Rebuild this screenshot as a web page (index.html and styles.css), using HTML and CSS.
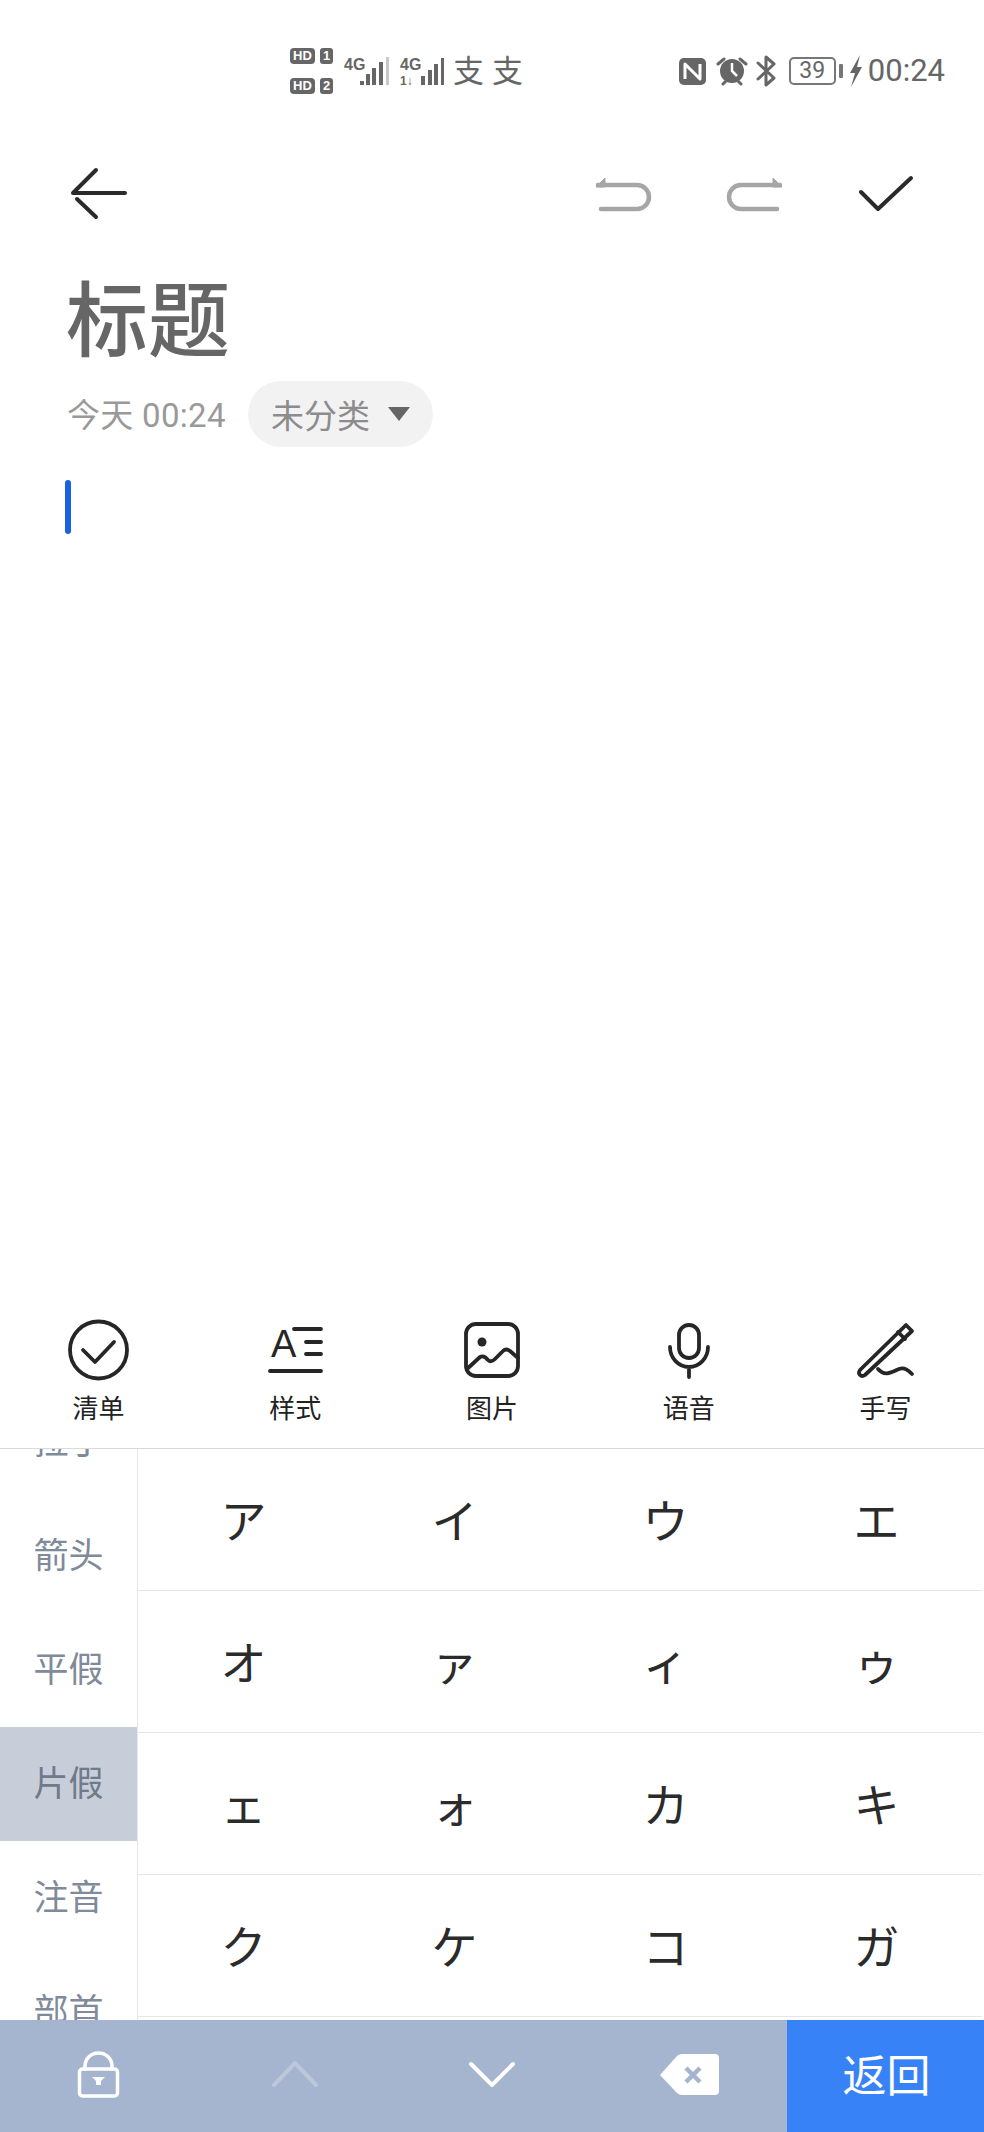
FILE: index.html
```html
<!DOCTYPE html>
<html lang="zh">
<head>
<meta charset="utf-8">
<title>笔记</title>
<link rel="stylesheet" href="styles.css">
</head>
<body>
<div class="page">
  <div class="status">
    <div class="status-left">
      <div class="sims">
        <div class="sim"><span class="hd">HD</span><span class="simno">1</span></div>
        <div class="sim"><span class="hd">HD</span><span class="simno">2</span></div>
      </div>
      <svg class="signal" viewBox="344 50 100 40">
        <text x="344" y="70" class="tag">4G</text>
        <path class="bar" d="M362 85v-4M368 85v-11M374 85v-17M381 85v-23"/>
        <path class="bar dim" d="M387.500 85V57"/>
        <text x="400" y="70" class="tag">4G</text>
        <text x="400" y="85" class="tag small">1↓</text>
        <path class="bar" d="M423 85v-9M430 85v-15M436 85v-21M443 85v-27"/>
      </svg>
      <span class="pay">支</span>
      <span class="pay">支</span>
    </div>
    <div class="status-right">
      <svg class="st-icon nfc" viewBox="677 57 27 27">
        <rect class="fill" x="677" y="57" width="27" height="27" rx="5"/>
        <path class="nfc-n" d="M683 78V63L698 78V63"/>
      </svg>
      <svg class="st-icon alarm" viewBox="714 56 32 30">
        <circle class="fill" cx="730" cy="71" r="12"/>
        <path class="hand" d="M730 63v8l5 5"/>
        <path class="ear" d="M716 64l6-5M744 64l-6-5M721 84l3-3M739 84l-3-3"/>
      </svg>
      <svg class="st-icon bt" viewBox="754 55 21 32">
        <path class="ear" d="M756 63l16 15-8 7V57l8 7-16 15"/>
      </svg>
      <div class="battery"><span class="batt-num">39</span></div>
      <span class="batt-nub"></span>
      <svg class="st-icon bolt" viewBox="847 55 14 32">
        <path class="fill" d="M858 55L848 73H853L849 87L860 67H855Z"/>
      </svg>
      <span class="time">00:24</span>
    </div>
  </div>

  <div class="header">
    <svg class="hd-back" viewBox="68 144 60 100"><path class="ico-dark" d="M125 193H73L96 170M77 199L96 217"/></svg>
    <div class="hd-actions">
      <svg class="hd-ico" viewBox="590 144 66 100"><path class="ico-grey" d="M598 185H637A12 12 0 0 1 637 209H601"/><path class="tri" d="M596 187L605 178V187Z"/></svg>
      <svg class="hd-ico" viewBox="721 144 66 100"><path class="ico-grey" d="M780 185H741A12 12 0 0 0 741 209H777"/><path class="tri" d="M782 187L773 178V187Z"/></svg>
      <svg class="hd-ico" viewBox="852 144 66 100"><path class="ico-dark" d="M861 192L878 209L911 178"/></svg>
    </div>
  </div>

  <h1 class="title">标题</h1>
  <div class="meta">
    <span class="date">今天 00:24</span>
    <span class="chip"><span class="chip-text">未分类</span><span class="chip-arrow"></span></span>
  </div>
  <div class="caret"></div>
  <div class="spacer"></div>

  <div class="tools">
    <div class="tool">
      <svg class="tool-ico" viewBox="63 1318 70 64"><circle class="line" cx="98.500" cy="1350" r="28.500"/><path class="line" d="M83 1350L95 1362L114 1342"/></svg>
      <span class="tool-label">清单</span>
    </div>
    <div class="tool">
      <svg class="tool-ico" viewBox="260 1318 70 64"><text x="271" y="1357" class="style-a">A</text><path class="line" d="M294 1329H321M306 1342H321M306 1354H321M270 1371H321"/></svg>
      <span class="tool-label">样式</span>
    </div>
    <div class="tool">
      <svg class="tool-ico" viewBox="457 1318 70 64"><rect class="line" x="466" y="1324" width="52" height="52" rx="10"/><circle class="dot" cx="482" cy="1342" r="4.500"/><path class="line" d="M467 1369L480 1357Q484 1355 488 1360Q491 1363 495 1359L503 1351Q506 1348 510 1351L518 1358"/></svg>
      <span class="tool-label">图片</span>
    </div>
    <div class="tool">
      <svg class="tool-ico" viewBox="654 1318 70 64"><rect class="line" x="679" y="1325" width="20" height="33" rx="10"/><path class="line" d="M670 1347A19 20 0 0 0 708 1347M689 1368V1377"/></svg>
      <span class="tool-label">语音</span>
    </div>
    <div class="tool">
      <svg class="tool-ico" viewBox="851 1318 70 64"><path class="line" d="M906 1325L912 1331L865 1375Q862 1377 860 1375Q858 1373 860 1370ZM898 1332L905 1339"/><path class="line" d="M878 1369C885 1377 892 1372 899 1369C905 1367 909 1371 912 1374"/></svg>
      <span class="tool-label">手写</span>
    </div>
  </div>

  <div class="keyboard">
    <div class="side">
      <div class="side-list">
        <div class="side-item">拉丁</div>
        <div class="side-item">箭头</div>
        <div class="side-item">平假</div>
        <div class="side-item is-active">片假</div>
        <div class="side-item">注音</div>
        <div class="side-item">部首</div>
      </div>
    </div>
    <div class="keys">
      <div class="key">ア</div><div class="key">イ</div><div class="key">ウ</div><div class="key">エ</div>
      <div class="key">オ</div><div class="key">ァ</div><div class="key">ィ</div><div class="key">ゥ</div>
      <div class="key">ェ</div><div class="key">ォ</div><div class="key">カ</div><div class="key">キ</div>
      <div class="key">ク</div><div class="key">ケ</div><div class="key">コ</div><div class="key">ガ</div>
    </div>
  </div>

  <div class="bottom">
    <div class="bottom-cell">
      <svg class="bot-ico" viewBox="66 2044 64 64"><rect class="white-line thin" x="79.500" y="2069" width="38" height="27" rx="3"/><path class="white-line thin" d="M85 2069V2066A13.500 13 0 0 1 112 2066V2069"/><path class="white-fill" d="M92 2077H105L101 2081V2085H96V2081Z"/></svg>
    </div>
    <div class="bottom-cell">
      <svg class="bot-ico" viewBox="263 2044 64 64"><path class="dim-line" d="M274 2085L295 2063L316 2085"/></svg>
    </div>
    <div class="bottom-cell">
      <svg class="bot-ico" viewBox="460 2044 64 64"><path class="white-line" d="M471 2064L492 2085L513 2064"/></svg>
    </div>
    <div class="bottom-cell">
      <svg class="bot-ico" viewBox="657 2044 64 64"><path class="white-fill" d="M660 2075L677 2056Q679 2054 682 2054H715Q719 2054 719 2058V2091Q719 2095 715 2095H682Q679 2095 677 2093Z"/><path class="x-line" d="M686 2068L700 2082M700 2068L686 2082"/></svg>
    </div>
    <div class="bottom-cell back">返回</div>
  </div>
</div>
</body>
</html>
```

FILE: styles.css
```css
* { box-sizing: border-box; }
html, body { margin: 0; padding: 0; background: #fff; }
body { font-family: Roboto, "Noto Sans CJK SC", sans-serif; }

.page { width: 984px; height: 2132px; display: flex; flex-direction: column; overflow: hidden; background: #fff; }

/* status bar */
.status { height: 144px; padding: 48px 39px 0 290px; display: flex; justify-content: space-between; align-items: flex-start; color: #666; }
.status-left { display: flex; align-items: flex-start; }
.sims { display: flex; flex-direction: column; gap: 14px; }
.sim { display: flex; gap: 5px; height: 16px; }
.hd { width: 25px; height: 16px; border-radius: 4px; background: #666; color: #fff; font: 700 13px/16px "Liberation Sans", sans-serif; text-align: center; }
.simno { width: 13px; height: 16px; border-radius: 3px; background: #666; color: #fff; font: 700 13px/16px "Liberation Sans", sans-serif; text-align: center; }
.signal { width: 100px; height: 40px; margin: 2px 0 0 11px; }
.tag { font: 700 16px "Liberation Sans Narrow", "Liberation Sans", sans-serif; fill: #666; }
.tag.small { font-size: 12px; }
.bar { stroke: #666; stroke-width: 4; fill: none; }
.bar.dim { stroke: #c8c8c8; stroke-width: 3; }
.pay { width: 30px; margin: 3px 0 0 9px; font: 400 31px/36px "Noto Sans CJK SC", sans-serif; color: #666; text-align: center; }

.status-right { display: flex; align-items: center; height: 32px; margin-top: 7px; }
.st-icon { display: block; }
.nfc { width: 27px; height: 27px; }
.alarm { width: 32px; height: 30px; margin-left: 10px; }
.bt { width: 21px; height: 32px; margin-left: 8px; }
.fill { fill: #666; }
.nfc-n { fill: none; stroke: #fff; stroke-width: 3; stroke-linejoin: round; }
.hand { fill: none; stroke: #fff; stroke-width: 2.500; }
.ear { fill: none; stroke: #666; stroke-width: 3; stroke-linecap: round; stroke-linejoin: round; }
.battery { width: 47px; height: 28px; margin-left: 12px; border: 2px solid #777; border-radius: 5px; display: flex; align-items: center; justify-content: center; }
.batt-num { font: 400 23px/24px Roboto, sans-serif; color: #666; }
.batt-nub { width: 4px; height: 14px; margin-left: 3px; border-radius: 1px; background: #777; }
.bolt { width: 14px; height: 32px; margin-left: 6px; }
.time { margin-left: 5px; font: 400 31px/32px Roboto, sans-serif; color: #666; }

/* header */
.header { height: 100px; padding: 0 66px 0 68px; display: flex; justify-content: space-between; flex: none; }
.hd-back { width: 60px; height: 100px; }
.hd-actions { display: flex; gap: 65px; }
.hd-ico { width: 66px; height: 100px; }
.ico-dark { fill: none; stroke: #2a2a2a; stroke-width: 4; stroke-linecap: round; stroke-linejoin: round; }
.ico-grey { fill: none; stroke: #a6a6a6; stroke-width: 4.500; stroke-linecap: round; stroke-linejoin: round; }
.tri { fill: #a6a6a6; stroke: #a6a6a6; stroke-width: 1; stroke-linejoin: round; }

/* title block */
.title { margin: 26px 0 0 66px; height: 94px; font: 500 82px/90px "Noto Sans CJK SC", sans-serif; color: #666; flex: none; }
.meta { margin: 17px 0 0 67px; height: 66px; display: flex; align-items: center; flex: none; }
.date { width: 159px; padding-top: 3px; font: 400 33px/40px Roboto, "Noto Sans CJK SC", sans-serif; letter-spacing: 0.300px; color: #999; white-space: nowrap; }
.chip { margin-left: 22px; height: 66px; width: 185px; padding: 0 0 0 23px; border-radius: 33px; background: #f2f2f2; display: flex; align-items: center; }
.chip-text { font: 400 33px/40px "Noto Sans CJK SC", sans-serif; color: #8c8c8c; }
.chip-arrow { margin: 0 0 0 18px; width: 0; height: 0; border-left: 11px solid transparent; border-right: 11px solid transparent; border-top: 14px solid #666; }
.caret { margin: 33px 0 0 65px; width: 6px; height: 54px; border-radius: 3px; background: #1a62e0; flex: none; }
.spacer { flex: 1; }

/* toolbar */
.tools { height: 149px; padding-top: 18px; display: grid; grid-template-columns: repeat(5, 1fr); border-bottom: 1px solid #d9d9d9; flex: none; }
.tool { display: flex; flex-direction: column; align-items: center; }
.tool-ico { width: 70px; height: 64px; }
.tool-label { margin-top: 7px; font: 400 26px/36px "Noto Sans CJK SC", sans-serif; color: #222; }
.line { fill: none; stroke: #262626; stroke-width: 3.800; stroke-linecap: round; stroke-linejoin: round; }
.dot { fill: #262626; }
.style-a { font: 400 38px "Liberation Sans", sans-serif; fill: #262626; }

/* keyboard */
.keyboard { height: 571px; display: flex; flex: none; overflow: hidden; }
.side { width: 138px; border-right: 1px solid #e8e8ea; overflow: hidden; flex: none; }
.side-list { margin-top: -64px; }
.side-item { height: 114px; padding-bottom: 7px; display: flex; align-items: center; justify-content: center; font: 400 35px/40px "Noto Sans CJK SC", sans-serif; color: #7f8a9a; }
.side-item.is-active { background: #c8ced9; color: #6f7a8a; }
.keys { flex: 1; padding-right: 2px; display: grid; grid-template-columns: repeat(4, 1fr); grid-auto-rows: 142px; }
.key { padding-bottom: 4px; display: flex; align-items: center; justify-content: center; border-bottom: 1px solid #e6e6e8; font: 400 46px/50px "Noto Sans CJK JP", "Noto Sans CJK SC", sans-serif; color: #2b2b2b; }

/* bottom bar */
.bottom { height: 112px; display: grid; grid-template-columns: repeat(5, 1fr); background: #a6b5cf; flex: none; }
.bottom-cell { display: flex; align-items: center; justify-content: center; }
.bot-ico { width: 64px; height: 64px; }
.white-line { fill: none; stroke: #fff; stroke-width: 4; stroke-linecap: round; stroke-linejoin: round; }
.white-line.thin { stroke-width: 3.500; }
.white-fill { fill: #fff; }
.dim-line { fill: none; stroke: #bcc7da; stroke-width: 4; stroke-linecap: round; stroke-linejoin: round; }
.x-line { fill: none; stroke: #a6b5cf; stroke-width: 4.500; }
.back { padding: 0 0 6px 2px; background: #3882f8; color: #fff; font: 400 44px/50px "Noto Sans CJK SC", sans-serif; }
```
